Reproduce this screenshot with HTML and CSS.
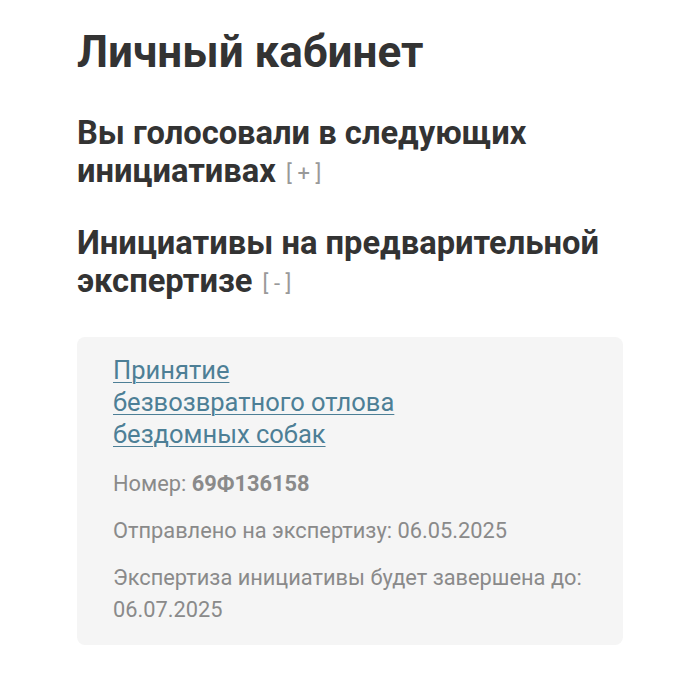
FILE: index.html
```html
<!DOCTYPE html>
<html lang="ru">
<head>
<meta charset="utf-8">
<link rel="stylesheet" href="styles.css">
</head>
<body>
<main class="page">
  <h1 class="title">Личный кабинет</h1>
  <h2 class="section">Вы голосовали в следующих инициативах <span class="toggle">[+]</span></h2>
  <h2 class="section">Инициативы на предварительной экспертизе <span class="toggle">[-]</span></h2>
  <div class="card">
    <a class="card-link" href="#">Принятие<br>безвозвратного отлова<br>бездомных собак</a>
    <p class="meta">Номер: <b>69Ф136158</b></p>
    <p class="meta">Отправлено на экспертизу: 06.05.2025</p>
    <p class="meta">Экспертиза инициативы будет завершена до: 06.07.2025</p>
  </div>
</main>
</body>
</html>
```
FILE: styles.css
```css
html, body { margin: 0; padding: 0; background: #fff; }
body { font-family: Roboto, "Noto Sans", sans-serif; color: #333; }
.page { padding: 27px 77px 0 77px; }
.title { margin: 0 0 37px; font-size: 44px; line-height: 50px; font-weight: 700; color: #333; }
.section { margin: 0 0 31px; font-size: 32.7px; line-height: 38px; font-weight: 700; color: #333; }
.section + .section { margin-bottom: 34px; }
.toggle { font-size: 22px; font-weight: 400; color: #999; letter-spacing: 5.5px; margin-left: 2px; vertical-align: 1px; }
.card { background: #f5f5f5; border-radius: 8px; padding: 17px 36px 19px; }
.card-link { display: block; font-size: 25.5px; line-height: 32px; color: #4d7f96; text-decoration: underline; text-decoration-thickness: 1px; text-underline-offset: 3px; margin-bottom: 18px; }
.meta { margin: 0 0 15px; font-size: 21.8px; line-height: 32px; color: #8a8a8a; }
.meta:last-child { margin-bottom: 0; }
.meta b { font-weight: 700; }
```
